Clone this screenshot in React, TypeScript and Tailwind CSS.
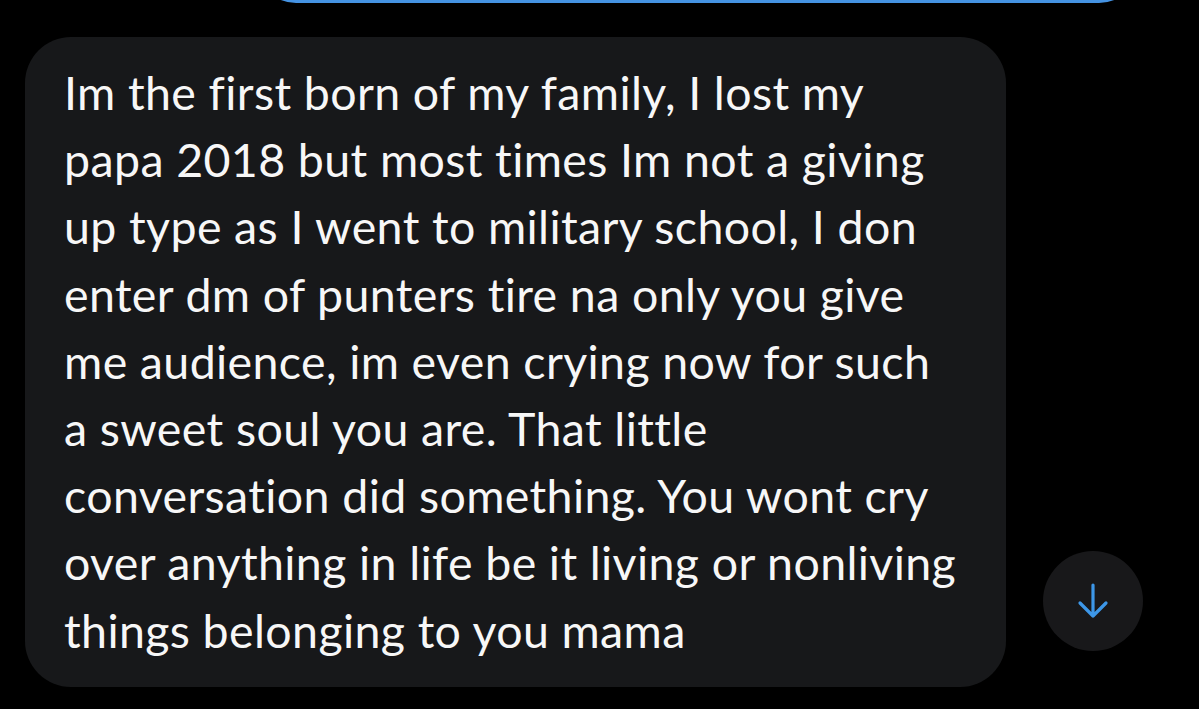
import React from "react";

const lines = [
  "Im the first born of my family, I lost my",
  "papa 2018 but most times Im not a giving",
  "up type as I went to military school, I don",
  "enter dm of punters tire na only you give",
  "me audience, im even crying now for such",
  "a sweet soul you are. That little",
  "conversation did something. You wont cry",
  "over anything in life be it living or nonliving",
  "things belonging to you mama",
];

export default function App() {
  return (
    <div className="w-[1199px] h-[709px] bg-black overflow-hidden flex flex-col">
      <div className="pl-[256px] pr-[60px]">
        <div className="h-[40px] -mt-[37px] bg-[#4593e3] rounded-b-[40px]" />
      </div>
      <div className="flex items-end mt-[34px] pl-[25px]">
        <div
          className="w-[981px] bg-[#17181a] rounded-[46px] pl-[39px] pt-[22px] pb-[23px] text-[#f7f7f7] text-[46.5px] leading-[67.2px] tracking-[0.38px] [font-variant-ligatures:none]"
          style={{ fontFamily: "Lato, 'Open Sans', sans-serif" }}
        >
          {lines.map((l, i) => (
            <div key={i} className="whitespace-nowrap">
              {l}
            </div>
          ))}
        </div>
        <div className="ml-[37px] mb-[36px] w-[100px] h-[100px] rounded-full bg-[#18181a] flex items-center justify-center">
          <svg width="32" height="36" viewBox="0 0 32 36" fill="none">
            <path
              d="M16 2 V33 M3 20 L16 33 L29 20"
              stroke="#3d97e8"
              strokeWidth="3.2"
              strokeLinecap="round"
              strokeLinejoin="round"
            />
          </svg>
        </div>
      </div>
    </div>
  );
}
